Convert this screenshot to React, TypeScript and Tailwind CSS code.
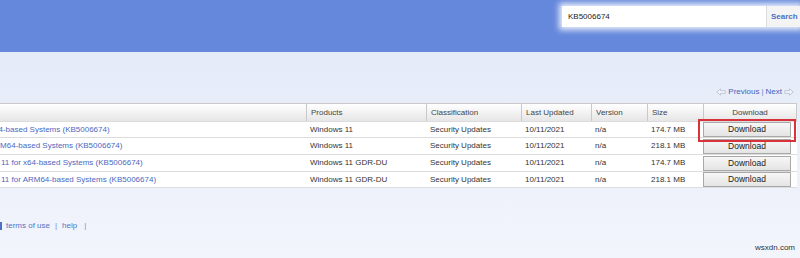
const cols = "grid grid-cols-[306px_120px_95px_70px_56px_56px_94px]";

const rows = [
  { title: "x64-based Systems (KB5006674)", shift: "-ml-[10px]", product: "Windows 11", size: "174.7 MB", h: "h-[16px]" },
  { title: "ARM64-based Systems (KB5006674)", shift: "-ml-[11px]", product: "Windows 11", size: "218.1 MB", h: "h-[17px]" },
  { title: "11 for x64-based Systems (KB5006674)", shift: "ml-[1px]", product: "Windows 11 GDR-DU", size: "174.7 MB", h: "h-[17px]" },
  { title: "11 for ARM64-based Systems (KB5006674)", shift: "ml-[1px]", product: "Windows 11 GDR-DU", size: "218.1 MB", h: "h-[17px]" },
];

function Arrow({ dir }: { dir: "left" | "right" }) {
  return (
    <svg width="10" height="8" viewBox="0 0 10 8" className={dir === "left" ? "" : "rotate-180"}>
      <path d="M0.8 4 L4.5 0.8 L4.5 2.6 L9.2 2.6 L9.2 5.4 L4.5 5.4 L4.5 7.2 Z" fill="#f3f5fb" stroke="#b8bfcc" strokeWidth="0.8" />
    </svg>
  );
}

export default function App() {
  return (
    <div className="relative w-[800px] h-[258px] overflow-hidden font-['Liberation_Sans',Arial,sans-serif] bg-gradient-to-b from-[#e1e8f8] to-[#f3f5fc]">
      <header className="h-[52px] bg-[#6588dc] flex justify-end items-start pt-[6px]">
        <div className="flex h-[21px] w-[238px] bg-white shadow-[0_0_6px_3px_rgba(255,255,255,0.85)]">
          <div className="flex-1 flex items-center pl-[6px] text-[8px] text-[#222]">KB5006674</div>
          <div className="w-[34px] flex items-center pl-[4px] bg-[#f4f4f4] border-l border-[#dcdcdc] text-[8px] font-bold text-[#4d6fc4]">
            Search
          </div>
        </div>
      </header>

      <div className="flex justify-end items-center gap-[2px] mt-[34px] h-[12px] pr-[6px] text-[8px] text-[#4564bb]">
        <Arrow dir="left" />
        <span>Previous</span>
        <span className="text-[#6d86c8]">|</span>
        <span>Next</span>
        <Arrow dir="right" />
      </div>

      <div className="mt-[5px] w-[797px] text-[8px] text-[#333]">
        <div className={`${cols} h-[18px] border-t border-[#c9c9c9] bg-gradient-to-b from-white to-[#e6e6e6] text-[#444]`}>
          <div />
          <div className="border-l border-[#c9c9c9] flex items-center pl-[4px]">Products</div>
          <div className="border-l border-[#c9c9c9] flex items-center pl-[4px]">Classification</div>
          <div className="border-l border-[#c9c9c9] flex items-center pl-[4px]">Last Updated</div>
          <div className="border-l border-[#c9c9c9] flex items-center pl-[4px]">Version</div>
          <div className="border-l border-[#c9c9c9] flex items-center pl-[4px]">Size</div>
          <div className="border-l border-r border-[#c9c9c9] flex items-center justify-center">Download</div>
        </div>
        {rows.map((r, i) => (
          <div key={i} className={`${cols} ${r.h} bg-white border-t border-[#dcdcdc] last:border-b`}>
            <div className="overflow-hidden flex items-center whitespace-nowrap text-[#4c68c0]">
              <span className={r.shift}>{r.title}</span>
            </div>
            <div className="flex items-center pl-[4px]">{r.product}</div>
            <div className="flex items-center pl-[4px]">Security Updates</div>
            <div className="flex items-center pl-[4px]">10/11/2021</div>
            <div className="flex items-center pl-[4px]">n/a</div>
            <div className="flex items-center pl-[4px]">{r.size}</div>
            <div className="flex items-center pr-[6px]">
              <button className="w-[88px] h-[15px] flex items-center justify-center border border-[#a9a9a9] bg-gradient-to-b from-[#f7f7f7] to-[#e4e4e4] text-[8.5px] text-[#222]">
                Download
              </button>
            </div>
          </div>
        ))}
      </div>

      <div className="absolute left-[698px] top-[119px] w-[98px] h-[23px] border-2 border-[#d8333c]" />

      <div className="mt-[32px] flex items-center gap-[5px] text-[8px] text-[#5573c4]">
        <span className="w-[2px] h-[8px] bg-[#4a73c8] mr-[-1px]" />
        <span>terms of use</span>
        <span className="text-[#7d90c4]">|</span>
        <span>help</span>
        <span className="text-[#7d90c4] ml-[2px]">|</span>
      </div>

      <div className="absolute right-[5px] bottom-[4px] text-[8px] text-[#333]">wsxdn.com</div>
    </div>
  );
}
